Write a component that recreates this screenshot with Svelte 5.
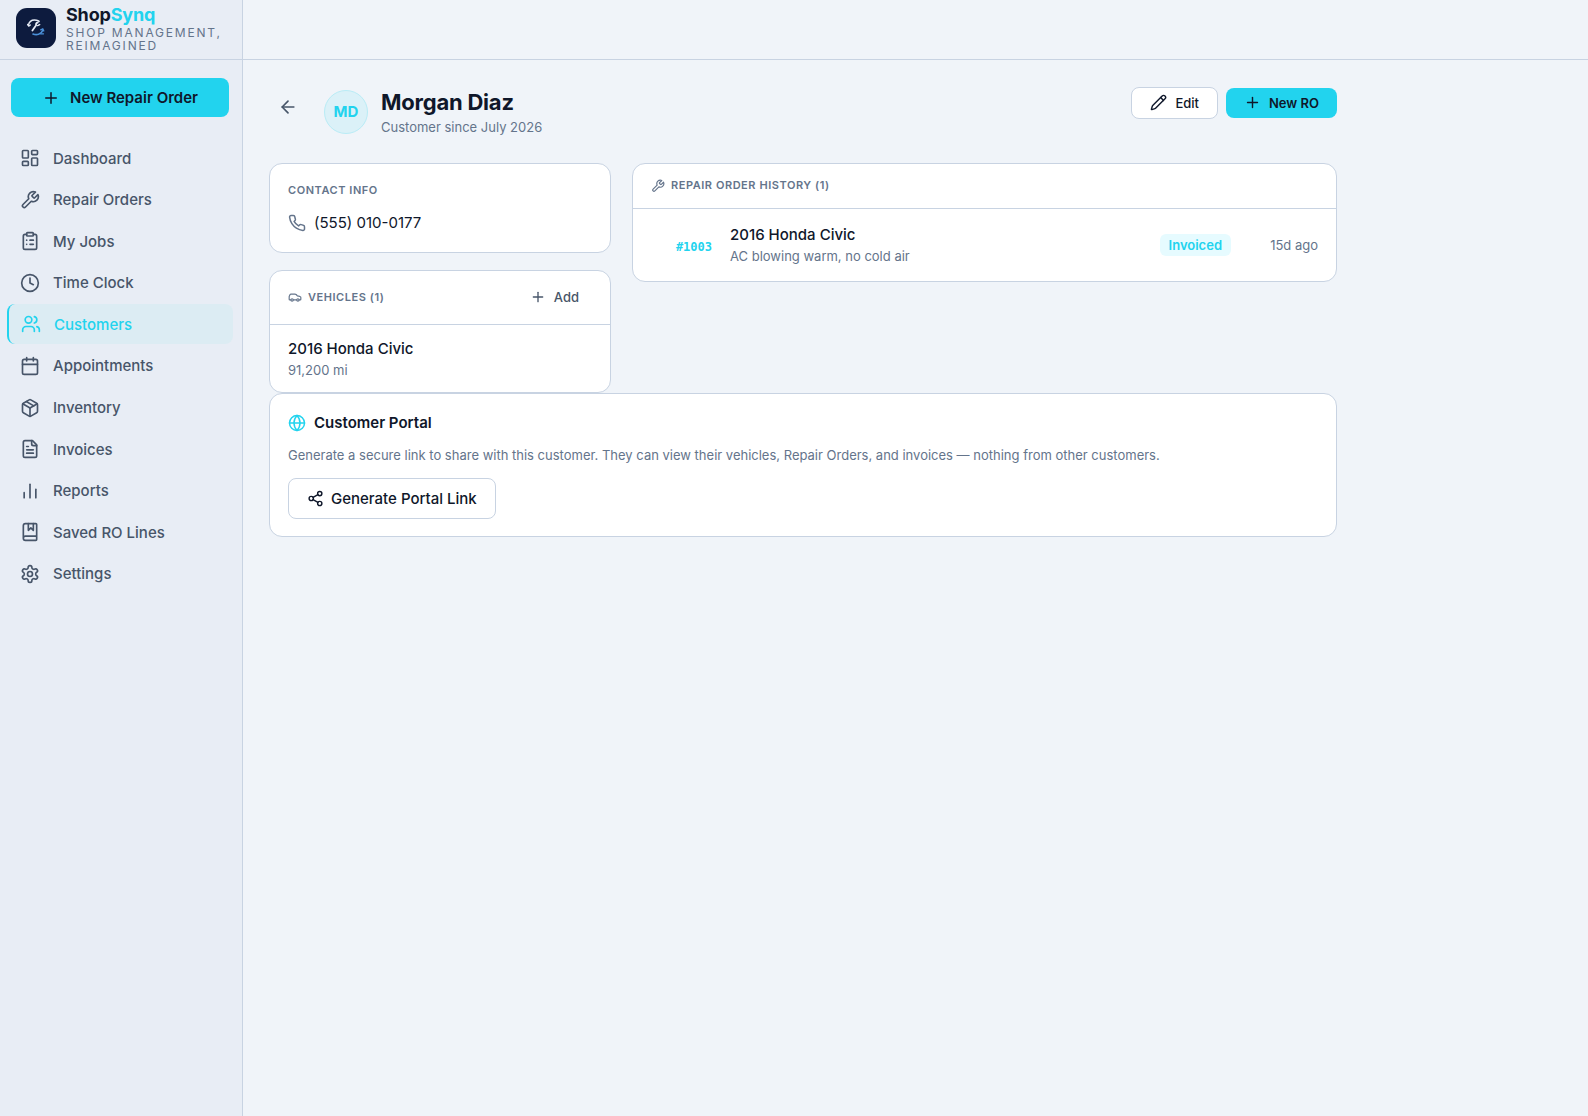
<script>
  const icons = {
    plus: '<path d="M5 12h14"/><path d="M12 5v14"/>',
    dashboard:
      '<rect width="7" height="9" x="3" y="3" rx="1"/><rect width="7" height="5" x="14" y="3" rx="1"/><rect width="7" height="9" x="14" y="12" rx="1"/><rect width="7" height="5" x="3" y="16" rx="1"/>',
    wrench:
      '<path d="M14.7 6.3a1 1 0 0 0 0 1.4l1.6 1.6a1 1 0 0 0 1.4 0l3.77-3.77a6 6 0 0 1-7.94 7.94l-6.91 6.91a2.12 2.12 0 0 1-3-3l6.91-6.91a6 6 0 0 1 7.94-7.94l-3.76 3.76z"/>',
    clipboard:
      '<rect width="8" height="4" x="8" y="2" rx="1" ry="1"/><path d="M16 4h2a2 2 0 0 1 2 2v14a2 2 0 0 1-2 2H6a2 2 0 0 1-2-2V6a2 2 0 0 1 2-2h2"/><path d="M12 11h4"/><path d="M12 16h4"/><path d="M8 11h.01"/><path d="M8 16h.01"/>',
    clock: '<circle cx="12" cy="12" r="10"/><path d="M12 6v6l4 2"/>',
    users:
      '<path d="M16 21v-2a4 4 0 0 0-4-4H6a4 4 0 0 0-4 4v2"/><circle cx="9" cy="7" r="4"/><path d="M22 21v-2a4 4 0 0 0-3-3.87"/><path d="M16 3.13a4 4 0 0 1 0 7.75"/>',
    calendar:
      '<path d="M8 2v4"/><path d="M16 2v4"/><rect width="18" height="18" x="3" y="4" rx="2"/><path d="M3 10h18"/>',
    package:
      '<path d="M11 21.73a2 2 0 0 0 2 0l7-4A2 2 0 0 0 21 16V8a2 2 0 0 0-1-1.73l-7-4a2 2 0 0 0-2 0l-7 4A2 2 0 0 0 3 8v8a2 2 0 0 0 1 1.73z"/><path d="M12 22V12"/><path d="m3.3 7 8.7 5 8.7-5"/><path d="m7.5 4.27 9 5.15"/>',
    file:
      '<path d="M15 2H6a2 2 0 0 0-2 2v16a2 2 0 0 0 2 2h12a2 2 0 0 0 2-2V7Z"/><path d="M14 2v4a2 2 0 0 0 2 2h4"/><path d="M10 9H8"/><path d="M16 13H8"/><path d="M16 17H8"/>',
    chart: '<path d="M19 20V10"/><path d="M12 20V4"/><path d="M5 20v-6"/>',
    book:
      '<path d="M10 2v8l3-3 3 3V2"/><path d="M4 19.5v-15A2.5 2.5 0 0 1 6.5 2H19a1 1 0 0 1 1 1v18a1 1 0 0 1-1 1H6.5a1 1 0 0 1 0-5H20"/>',
    settings:
      '<path d="M12.22 2h-.44a2 2 0 0 0-2 2v.18a2 2 0 0 1-1 1.73l-.43.25a2 2 0 0 1-2 0l-.15-.08a2 2 0 0 0-2.73.73l-.22.38a2 2 0 0 0 .73 2.73l.15.1a2 2 0 0 1 1 1.72v.51a2 2 0 0 1-1 1.74l-.15.09a2 2 0 0 0-.73 2.73l.22.38a2 2 0 0 0 2.73.73l.15-.08a2 2 0 0 1 2 0l.43.25a2 2 0 0 1 1 1.73V20a2 2 0 0 0 2 2h.44a2 2 0 0 0 2-2v-.18a2 2 0 0 1 1-1.73l.43-.25a2 2 0 0 1 2 0l.15.08a2 2 0 0 0 2.73-.73l.22-.39a2 2 0 0 0-.73-2.73l-.15-.08a2 2 0 0 1-1-1.74v-.5a2 2 0 0 1 1-1.74l.15-.09a2 2 0 0 0 .73-2.73l-.22-.38a2 2 0 0 0-2.73-.73l-.15.08a2 2 0 0 1-2 0l-.43-.25a2 2 0 0 1-1-1.73V4a2 2 0 0 0-2-2z"/><circle cx="12" cy="12" r="3"/>',
    back: '<path d="m12 19-7-7 7-7"/><path d="M19 12H5"/>',
    pencil:
      '<path d="M21.174 6.812a1 1 0 0 0-3.986-3.987L3.842 16.174a2 2 0 0 0-.5.83l-1.321 4.352a.5.5 0 0 0 .623.622l4.353-1.32a2 2 0 0 0 .83-.497z"/><path d="m15 5 4 4"/>',
    phone:
      '<path d="M22 16.92v3a2 2 0 0 1-2.18 2 19.79 19.79 0 0 1-8.63-3.07 19.5 19.5 0 0 1-6-6 19.79 19.79 0 0 1-3.07-8.67A2 2 0 0 1 4.11 2h3a2 2 0 0 1 2 1.72 12.84 12.84 0 0 0 .7 2.81 2 2 0 0 1-.45 2.11L8.09 9.91a16 16 0 0 0 6 6l1.27-1.27a2 2 0 0 1 2.11-.45 12.84 12.84 0 0 0 2.81.7A2 2 0 0 1 22 16.92z"/>',
    car:
      '<path d="M19 17h2c.6 0 1-.4 1-1v-3c0-.9-.7-1.7-1.5-1.9C18.7 10.6 16 10 16 10s-1.3-1.4-2.2-2.3c-.5-.4-1.1-.7-1.8-.7H5c-.6 0-1.1.4-1.4.9l-1.4 2.9A3.7 3.7 0 0 0 2 12v4c0 .6.4 1 1 1h2"/><circle cx="7" cy="17" r="2"/><path d="M9 17h6"/><circle cx="17" cy="17" r="2"/>',
    globe:
      '<circle cx="12" cy="12" r="10"/><path d="M12 2a14.5 14.5 0 0 0 0 20 14.5 14.5 0 0 0 0-20"/><path d="M2 12h20"/>',
    share:
      '<circle cx="18" cy="5" r="3"/><circle cx="6" cy="12" r="3"/><circle cx="18" cy="19" r="3"/><path d="m8.59 13.51 6.83 3.98"/><path d="m15.41 6.51-6.82 3.98"/>'
  };

  const navItems = [
    { label: 'Dashboard', icon: 'dashboard' },
    { label: 'Repair Orders', icon: 'wrench' },
    { label: 'My Jobs', icon: 'clipboard' },
    { label: 'Time Clock', icon: 'clock' },
    { label: 'Customers', icon: 'users' },
    { label: 'Appointments', icon: 'calendar' },
    { label: 'Inventory', icon: 'package' },
    { label: 'Invoices', icon: 'file' },
    { label: 'Reports', icon: 'chart' },
    { label: 'Saved RO Lines', icon: 'book' },
    { label: 'Settings', icon: 'settings' }
  ];

  const customer = {
    name: 'Morgan Diaz',
    initials: 'MD',
    since: 'July 2026',
    phone: '(555) 010-0177'
  };

  const vehicles = [{ name: '2016 Honda Civic', mileage: 91200 }];

  const orders = [
    {
      number: 1003,
      vehicle: '2016 Honda Civic',
      concern: 'AC blowing warm, no cold air',
      status: 'Invoiced',
      age: '15d ago'
    }
  ];

  let activeItem = $state('Customers');
</script>

{#snippet icon(name, size)}
  <svg
    class="icon"
    width={size}
    height={size}
    viewBox="0 0 24 24"
    fill="none"
    stroke="currentColor"
    stroke-width="2"
    stroke-linecap="round"
    stroke-linejoin="round"
    aria-hidden="true"
  >
    {@html icons[name]}
  </svg>
{/snippet}

<div class="app">
  <aside class="sidebar">
    <div class="brand">
      <svg class="logo" viewBox="0 0 40 40" aria-hidden="true">
        <rect width="40" height="40" rx="11" fill="#0d1b3e" />
        <g fill="none" stroke-linecap="round" stroke-linejoin="round">
          <path d="M12.4 17.200c.8-3.800 4-5.700 8.100-5 1.200.2 2 .6 2.600 1.200" stroke="#e6ebf5" stroke-width="1.500" />
          <path d="M11.600 16.400l1.100 1.700 1.700-1.100" stroke="#e6ebf5" stroke-width="1.300" />
          <path d="M21.800 14.500c-1.600.3-2 1.500-1.700 2.800l-3.700 5.300" stroke="#e6ebf5" stroke-width="1.800" />
          <path d="M21.600 17.600l2.100-1" stroke="#e6ebf5" stroke-width="1.400" />
          <path d="M17 26c3.500 1.500 8.300.4 9.600-3.600" stroke="#4a90d9" stroke-width="1.600" />
          <path d="M24.700 21.800l2.100-1 1 2.200M24.500 25.800h3" stroke="#4a90d9" stroke-width="1.300" />
        </g>
      </svg>
      <div class="brand-text">
        <span class="brand-name">Shop<span class="accent">Synq</span></span>
        <span class="tagline">Shop Management, Reimagined</span>
      </div>
    </div>

    <button class="btn-new-order" type="button">
      {@render icon('plus', 18)}
      New Repair Order
    </button>

    <nav class="nav" aria-label="Main">
      {#each navItems as item}
        <a
          href="#{item.icon}"
          class="nav-item"
          class:active={activeItem === item.label}
          onclick={() => (activeItem = item.label)}
        >
          {@render icon(item.icon, 20)}
          {item.label}
        </a>
      {/each}
    </nav>
  </aside>

  <div class="page">
    <header class="topbar"></header>

    <main class="content">
      <div class="customer-header">
        <button class="btn-back" type="button" aria-label="Back">
          {@render icon('back', 20)}
        </button>
        <div class="avatar">{customer.initials}</div>
        <div class="customer-title">
          <h1>{customer.name}</h1>
          <p>Customer since {customer.since}</p>
        </div>
        <div class="actions">
          <button class="btn btn-outline" type="button">
            {@render icon('pencil', 17)}
            Edit
          </button>
          <button class="btn btn-primary" type="button">
            {@render icon('plus', 17)}
            New RO
          </button>
        </div>
      </div>

      <div class="columns">
        <div class="left-column">
          <section class="card contact">
            <h2>Contact Info</h2>
            <div class="contact-row">
              {@render icon('phone', 18)}
              <span>{customer.phone}</span>
            </div>
          </section>

          <section class="card">
            <div class="card-header vehicles-header">
              <h2>{@render icon('car', 14)} Vehicles ({vehicles.length})</h2>
              <button class="btn btn-ghost" type="button">
                {@render icon('plus', 16)}
                Add
              </button>
            </div>
            {#each vehicles as vehicle}
              <div class="vehicle">
                <div class="item-title">{vehicle.name}</div>
                <div class="item-sub">{vehicle.mileage.toLocaleString('en-US')} mi</div>
              </div>
            {/each}
          </section>
        </div>

        <section class="card history">
          <div class="card-header">
            <h2>{@render icon('wrench', 14)} Repair Order History ({orders.length})</h2>
          </div>
          {#each orders as order}
            <div class="order">
              <span class="order-number">#{order.number}</span>
              <div class="order-info">
                <div class="item-title">{order.vehicle}</div>
                <div class="item-sub">{order.concern}</div>
              </div>
              <span class="badge">{order.status}</span>
              <span class="order-age">{order.age}</span>
            </div>
          {/each}
        </section>
      </div>

      <section class="card portal">
        <h3>{@render icon('globe', 18)} Customer Portal</h3>
        <p>
          Generate a secure link to share with this customer. They can view their vehicles, Repair
          Orders, and invoices — nothing from other customers.
        </p>
        <button class="btn-portal" type="button">
          {@render icon('share', 17)}
          Generate Portal Link
        </button>
      </section>
    </main>
  </div>
</div>

<style>
  :global(body) {
    background: #f0f4f9;
  }

  .app {
    display: flex;
    min-height: 100vh;
    font-family: Inter, sans-serif;
    font-size: 15px;
    color: #0f172a;
  }

  button {
    font-family: inherit;
    cursor: pointer;
  }

  .icon {
    flex-shrink: 0;
  }

  /* Sidebar */
  .sidebar {
    box-sizing: border-box;
    width: 243px;
    flex-shrink: 0;
    background: #e8edf5;
    border-right: 1px solid #c8d3e2;
    display: flex;
    flex-direction: column;
  }

  .brand {
    box-sizing: border-box;
    height: 60px;
    display: flex;
    align-items: center;
    gap: 10px;
    padding: 0 16px 3px;
    border-bottom: 1px solid #c8d3e2;
  }

  .logo {
    width: 40px;
    height: 40px;
    flex-shrink: 0;
  }

  .brand-text {
    display: flex;
    flex-direction: column;
    gap: 1px;
  }

  .brand-name {
    font-size: 18px;
    line-height: 20px;
    font-weight: 700;
    letter-spacing: -0.01em;
  }

  .accent {
    color: #22d3ee;
  }

  .tagline {
    font-size: 12px;
    line-height: 13px;
    letter-spacing: 0.15em;
    text-transform: uppercase;
    color: #64748b;
  }

  .btn-new-order {
    display: flex;
    align-items: center;
    justify-content: center;
    gap: 10px;
    height: 39px;
    margin: 18px 13px 21px 11px;
    border: none;
    border-radius: 8px;
    background: #22d3ee;
    color: #0f172a;
    font-size: 15px;
    font-weight: 600;
  }

  .nav {
    display: flex;
    flex-direction: column;
    justify-content: space-between;
    min-height: 456px;
    padding: 0 9px 0 7px;
  }

  .nav-item {
    box-sizing: border-box;
    display: flex;
    align-items: center;
    gap: 13px;
    height: 40px;
    padding: 0 13px;
    border-radius: 8px;
    color: #475569;
    font-weight: 500;
    text-decoration: none;
  }

  .nav-item.active {
    padding-left: 12px;
    border-left: 2px solid #22d3ee;
    background: #dcecf3;
    color: #22d3ee;
  }

  /* Page */
  .page {
    flex: 1;
    min-width: 0;
  }

  .topbar {
    box-sizing: border-box;
    height: 60px;
    border-bottom: 1px solid #c8d3e2;
  }

  .content {
    box-sizing: border-box;
    max-width: 1120px;
    padding: 27px 26px;
  }

  .customer-header {
    display: flex;
    align-items: flex-start;
    margin-bottom: 26px;
  }

  .btn-back {
    display: flex;
    align-items: center;
    justify-content: center;
    width: 38px;
    height: 40px;
    margin-right: 17px;
    padding: 0;
    border: none;
    background: none;
    color: #475569;
  }

  .avatar {
    box-sizing: border-box;
    width: 44px;
    height: 44px;
    margin-top: 3px;
    border: 1px solid #b9ecf6;
    border-radius: 50%;
    background: #dbf1f8;
    color: #22d3ee;
    font-weight: 700;
    line-height: 42px;
    text-align: center;
  }

  .customer-title {
    flex: 1;
    margin-left: 13px;
  }

  h1 {
    margin: 0;
    font-size: 22px;
    line-height: 30px;
    font-weight: 700;
    letter-spacing: -0.01em;
  }

  .customer-title p {
    margin: 0;
    font-size: 13px;
    line-height: 20px;
    color: #64748b;
  }

  .actions {
    display: flex;
    align-items: center;
    gap: 8px;
  }

  .btn {
    display: flex;
    align-items: center;
    gap: 8px;
    height: 30px;
    padding: 0 18px 1px;
    border: none;
    border-radius: 8px;
    font-size: 13px;
    font-weight: 500;
  }

  .btn-outline {
    height: 32px;
    border: 1px solid #c8d3e2;
    background: #fff;
    color: #0f172a;
  }

  .btn-primary {
    background: #22d3ee;
    color: #0f172a;
    font-weight: 600;
  }

  .btn-ghost {
    padding: 0 13px 1px;
    background: none;
    color: #475569;
  }

  /* Cards */
  .columns {
    display: grid;
    grid-template-columns: repeat(3, minmax(0, 1fr));
    gap: 21px;
    align-items: start;
  }

  .left-column {
    display: flex;
    flex-direction: column;
    gap: 17px;
  }

  .history {
    grid-column: span 2;
  }

  .card {
    border: 1px solid #c8d3e2;
    border-radius: 13px;
    background: #fff;
  }

  h2 {
    display: flex;
    align-items: center;
    gap: 6px;
    margin: 0;
    font-size: 11px;
    line-height: 17px;
    font-weight: 600;
    letter-spacing: 0.05em;
    text-transform: uppercase;
    color: #64748b;
  }

  .contact {
    padding: 18px;
  }

  .contact-row {
    display: flex;
    align-items: center;
    gap: 8px;
    margin-top: 13px;
    line-height: 22px;
  }

  .contact-row .icon {
    color: #64748b;
  }

  .card-header {
    display: flex;
    align-items: center;
    justify-content: space-between;
    padding: 13px 18px 14px;
    border-bottom: 1px solid #c8d3e2;
  }

  .vehicles-header {
    padding: 11px 18px 12px;
  }

  .vehicle {
    padding: 12px 18px;
  }

  .item-title {
    font-weight: 500;
    line-height: 23px;
  }

  .item-sub {
    font-size: 13px;
    line-height: 20px;
    color: #64748b;
  }

  .order {
    display: flex;
    align-items: center;
    padding: 14px 18px 15px;
  }

  .order-number {
    width: 61px;
    margin-right: 18px;
    padding-top: 4px;
    font-family: "DejaVu Sans Mono", monospace;
    font-size: 12px;
    line-height: 18px;
    font-weight: 700;
    text-align: right;
    color: #22d3ee;
  }

  .order-info {
    flex: 1;
    min-width: 0;
  }

  .badge {
    padding: 0 9px;
    border-radius: 6px;
    background: #e6fbff;
    color: #22d3ee;
    font-size: 13px;
    line-height: 22px;
    font-weight: 600;
  }

  .order-age {
    width: 87px;
    font-size: 13px;
    text-align: right;
    color: #64748b;
  }

  .portal {
    padding: 18px 18px 17px;
  }

  h3 {
    display: flex;
    align-items: center;
    gap: 8px;
    margin: 0;
    font-size: 15px;
    line-height: 22px;
    font-weight: 600;
  }

  h3 .icon {
    color: #22d3ee;
  }

  .portal p {
    margin: 11px 0 13px;
    font-size: 13px;
    line-height: 20px;
    color: #64748b;
  }

  .btn-portal {
    display: flex;
    align-items: center;
    gap: 7px;
    height: 41px;
    padding: 0 18px 1px;
    border: 1px solid #c8d3e2;
    border-radius: 8px;
    background: #fff;
    color: #0f172a;
    font-size: 15px;
    font-weight: 500;
  }
</style>
